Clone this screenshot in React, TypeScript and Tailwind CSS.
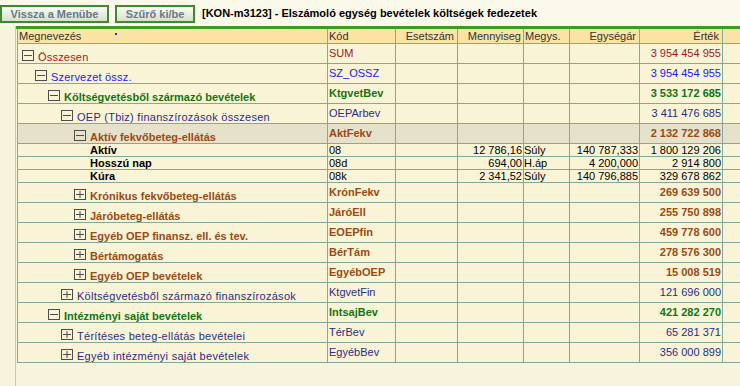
import React from 'react'

type Tone = 'red' | 'blue' | 'green' | 'navy' | 'brown' | 'black'

type Row = {
  level: number
  name: string
  code: string
  tone: Tone
  bold?: boolean
  icon?: 'minus' | 'plus'
  kind?: 'gray' | 'sub'
  menny?: string
  megys?: string
  ar?: string
  ertek: string
}

const toneClass: Record<Tone, string> = {
  red: 'text-[#a31818]',
  blue: 'text-[#2020f4]',
  green: 'text-[#127512]',
  navy: 'text-[#2c2c86]',
  brown: 'text-[#9b4a16]',
  black: 'text-black',
}

// the regular-weight labels run a little wider in the original
const nameTrack: Record<Tone, string> = {
  red: 'tracking-[0.2px]',
  blue: 'tracking-[0.2px]',
  green: '',
  navy: 'tracking-[0.28px]',
  brown: '',
  black: '',
}

const rows: Row[] = [
  { level: 0, name: 'Összesen', code: 'SUM', tone: 'red', icon: 'minus', ertek: '3 954 454 955' },
  { level: 1, name: 'Szervezet össz.', code: 'SZ_OSSZ', tone: 'blue', icon: 'minus', ertek: '3 954 454 955' },
  { level: 2, name: 'Költségvetésből származó bevételek', code: 'KtgvetBev', tone: 'green', bold: true, icon: 'minus', ertek: '3 533 172 685' },
  { level: 3, name: 'OEP (Tbiz) finanszírozások összesen', code: 'OEPArbev', tone: 'navy', icon: 'minus', ertek: '3 411 476 685' },
  { level: 4, name: 'Aktív fekvőbeteg-ellátás', code: 'AktFekv', tone: 'brown', bold: true, icon: 'minus', kind: 'gray', ertek: '2 132 722 868' },
  { level: 4, name: 'Aktív', code: '08', tone: 'black', kind: 'sub', menny: '12 786,16', megys: 'Súly', ar: '140 787,333', ertek: '1 800 129 206' },
  { level: 4, name: 'Hosszú nap', code: '08d', tone: 'black', kind: 'sub', menny: '694,00', megys: 'H.áp', ar: '4 200,000', ertek: '2 914 800' },
  { level: 4, name: 'Kúra', code: '08k', tone: 'black', kind: 'sub', menny: '2 341,52', megys: 'Súly', ar: '140 796,885', ertek: '329 678 862' },
  { level: 4, name: 'Krónikus fekvőbeteg-ellátás', code: 'KrónFekv', tone: 'brown', bold: true, icon: 'plus', ertek: '269 639 500' },
  { level: 4, name: 'Járóbeteg-ellátás', code: 'JáróEll', tone: 'brown', bold: true, icon: 'plus', ertek: '255 750 898' },
  { level: 4, name: 'Egyéb OEP finansz. ell. és tev.', code: 'EOEPfin', tone: 'brown', bold: true, icon: 'plus', ertek: '459 778 600' },
  { level: 4, name: 'Bértámogatás', code: 'BérTám', tone: 'brown', bold: true, icon: 'plus', ertek: '278 576 300' },
  { level: 4, name: 'Egyéb OEP bevételek', code: 'EgyébOEP', tone: 'brown', bold: true, icon: 'plus', ertek: '15 008 519' },
  { level: 3, name: 'Költségvetésből származó finanszírozások', code: 'KtgvetFin', tone: 'navy', icon: 'plus', ertek: '121 696 000' },
  { level: 2, name: 'Intézményi saját bevételek', code: 'IntsajBev', tone: 'green', bold: true, icon: 'minus', ertek: '421 282 270' },
  { level: 3, name: 'Térítéses beteg-ellátás bevételei', code: 'TérBev', tone: 'navy', icon: 'plus', ertek: '65 281 371' },
  { level: 3, name: 'Egyéb intézményi saját bevételek', code: 'EgyébBev', tone: 'navy', icon: 'plus', ertek: '356 000 899' },
]

const cols = 'grid grid-cols-[310px_68px_62px_66px_46px_70px_83px_1fr]'
const cell = 'border-l border-[#84a999] min-w-0 overflow-hidden whitespace-nowrap'

function TreeIcon({ type }: { type: 'minus' | 'plus' }) {
  return (
    <svg width="12" height="11" viewBox="0 0 12 11" className="shrink-0">
      <rect x="0.5" y="0.5" width="11" height="10" fill="none" stroke="#4d4d4d" />
      <line x1="2" y1="5.5" x2="10" y2="5.5" stroke="#4d4d4d" />
      {type === 'plus' && <line x1="6" y1="2" x2="6" y2="9" stroke="#4d4d4d" />}
    </svg>
  )
}

function Button({ label, className }: { label: string; className: string }) {
  return (
    <div
      className={`flex h-[18px] items-center justify-center border-2 border-[#3f8a2e] bg-gradient-to-b from-[#fafcf6] to-[#d5e1c9] text-[11px] font-bold text-[#6a7888] ${className}`}
    >
      {label}
    </div>
  )
}

function DataRow({ r }: { r: Row }) {
  const sub = r.kind === 'sub'
  const tone = `${toneClass[r.tone]} ${r.bold ? 'font-bold' : ''}`
  const bg = r.kind === 'gray' ? 'bg-[#e5e1ca]' : 'bg-[#f9f4d6]'
  const h = sub ? 'h-[13px] leading-[12px]' : 'h-[20px] leading-[19px]'
  const num = `${cell} text-right pr-[1px]`
  return (
    <div className={`${cols} ${bg} ${h} border-b border-[#84a999]`}>
      {sub ? (
        <div className={`${cell} pl-[72px] font-bold text-black`}>{r.name}</div>
      ) : (
        <div className={`${cell} flex items-start gap-[4px] pt-[6px] leading-[12px]`} style={{ paddingLeft: 4 + r.level * 13 }}>
          {r.icon && <TreeIcon type={r.icon} />}
          <span className={`${tone} ${nameTrack[r.tone]} pt-[1px]`}>{r.name}</span>
        </div>
      )}
      <div className={`${cell} pl-[1px] ${sub ? 'text-black' : tone}`}>{r.code}</div>
      <div className={num} />
      <div className={`${num} text-black`}>{r.menny}</div>
      <div className={`${cell} text-black`}>{r.megys}</div>
      <div className={`${num} text-black`}>{r.ar}</div>
      <div className={`${num} ${sub ? 'text-black' : tone}`}>{r.ertek}</div>
      <div className={cell} />
    </div>
  )
}

export default function App() {
  return (
    <div className="flex h-[386px] w-[740px] flex-col overflow-hidden bg-[#f8f4dc] font-['Liberation_Sans',Arial,sans-serif] text-[11px]">
      <div className="flex h-[26px] items-start bg-[#fbf9ea] pt-[5px]">
        <Button label="Vissza a Menübe" className="w-[109px]" />
        <Button label="Szűrő ki/be" className="ml-[6px] w-[80px]" />
        <div className="ml-[7px] pt-[2px] text-[11px] font-bold leading-[13px] text-black">
          [KON-m3123] - Elszámoló egység bevételek költségek fedezetek
        </div>
      </div>
      <div className="ml-[15px] flex flex-1 flex-col border-l border-[#e4c76c]">
        <div className="h-[3px] bg-[#3f9a22]" />
        <div className="ml-[1px]">
          <div className={`${cols} h-[15px] border-b border-[#84a999] bg-[#f9e4a3] leading-[14px] text-[#333]`}>
            <div className={`${cell} flex items-center pl-[1px]`}>
              Megnevezés
              <span className="ml-[34px] mb-[4px] inline-block h-[2px] w-[2px] bg-[#2030e0]" />
            </div>
            <div className={`${cell} pl-[1px]`}>Kód</div>
            <div className={`${cell} pr-[3px] text-right`}>Esetszám</div>
            <div className={`${cell} pr-[2px] text-right`}>Mennyiseg</div>
            <div className={`${cell} pl-[1px]`}>Megys.</div>
            <div className={`${cell} pr-[3px] text-right`}>Egységár</div>
            <div className={`${cell} pr-[3px] text-right`}>Érték</div>
            <div className={cell} />
          </div>
          {rows.map((r) => (
            <DataRow key={r.name + r.code} r={r} />
          ))}
        </div>
      </div>
    </div>
  )
}
